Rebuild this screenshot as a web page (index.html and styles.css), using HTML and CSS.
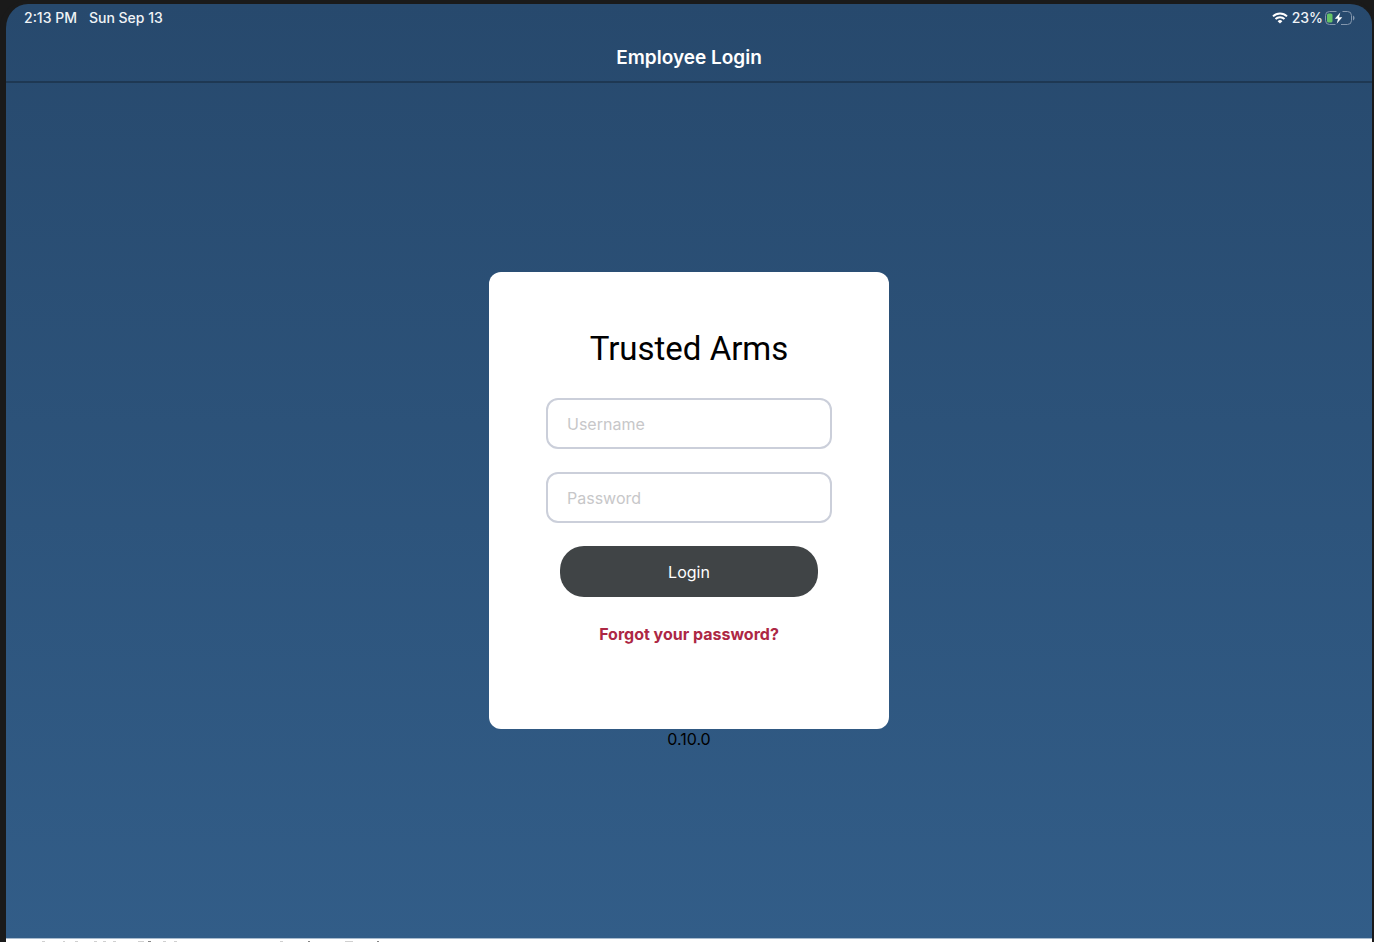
FILE: index.html
```html
<!DOCTYPE html>
<html lang="en">
<head>
<meta charset="utf-8">
<meta name="viewport" content="width=device-width, initial-scale=1">
<title>Employee Login</title>
<link rel="stylesheet" href="styles.css">
</head>
<body>
<div class="screen">
  <div class="status-bar">
    <div class="status-left"><span>2:13 PM</span><span>Sun Sep 13</span></div>
    <div class="status-right">
      <svg class="wifi" viewBox="0 0 16 12" width="16" height="12" aria-hidden="true">
        <path d="M1 4.400a10 10 0 0 1 14 0M3.500 7a6.400 6.400 0 0 1 9 0" fill="none" stroke="#fff" stroke-width="2"/>
        <path d="M8 11.600 5.600 9.200a3.400 3.400 0 0 1 4.800 0z" fill="#fff"/>
      </svg>
      <span class="percent">23%</span>
      <svg class="battery" viewBox="0 0 30 14" width="30" height="14" aria-hidden="true">
        <path d="M11.500.5H4.500a4 4 0 0 0-4 4v5a4 4 0 0 0 4 4h6M17.500.5h5a4 4 0 0 1 4 4v5a4 4 0 0 1-4 4H16" fill="none" stroke="#8497ad" stroke-width="1"/>
        <path d="M28 4.500c2 .8 2 4.200 0 5z" fill="#8497ad"/>
        <rect x="2" y="2.500" width="5.500" height="9" rx="1.600" fill="#65c466"/>
        <path d="M15.300 1.500 9.800 7.800h3.200l-1.300 4.900 5.600-6.500h-3.300z" fill="#fff"/>
      </svg>
    </div>
  </div>
  <header class="nav-bar"><h1 class="nav-title">Employee Login</h1></header>
  <main class="content">
    <form class="card">
      <h2 class="brand">Trusted Arms</h2>
      <input class="field" type="text" placeholder="Username" aria-label="Username">
      <input class="field" type="password" placeholder="Password" aria-label="Password">
      <button class="login" type="button">Login</button>
      <a class="forgot" href="#">Forgot your password?</a>
    </form>
    <p class="version">0.10.0</p>
  </main>
  <footer class="sheet">
    <svg class="sheet-marks" viewBox="0 0 420 1" width="420" height="1" aria-hidden="true">
      <path d="M36 .5h3M57 .5h2M69 .5h3M88 .5h3M97 .5h3M107 .5h3M132 .5h6M157 .5h3M168 .5h3M274 .5h3M339 .5h8" stroke="#d0d0d0"/>
      <path d="M142 .5h3M302 .5h2M371 .5h2" stroke="#858585"/>
    </svg>
  </footer>
</div>
</body>
</html>
```
FILE: styles.css
```css
* { box-sizing: border-box; }

body {
  margin: 0;
  background: #1a1a1a;
  font-family: Inter, "Liberation Sans", sans-serif;
  font-size: 16px;
  color: #000;
}

.screen {
  display: flex;
  flex-direction: column;
  min-height: 100vh;
  border: solid #1a1a1a;
  border-width: 4px 2px 0 6px;
  border-radius: 28px 24px 0 0;
  background: linear-gradient(#27496d, #325d88);
}

.status-bar {
  display: flex;
  justify-content: space-between;
  align-items: center;
  height: 28px;
  padding: 0 17px 0 18px;
  color: #f0f3f6;
  font-size: 14px;
  font-weight: 500;
  line-height: 20px;
}

.status-left { display: flex; gap: 12px; }
.status-right { display: flex; align-items: center; gap: 2px; }
.percent { margin-left: 2px; }

.nav-bar {
  display: flex;
  justify-content: center;
  align-items: center;
  height: 51px;
  padding-top: 2px;
  border-bottom: 2px solid #1e3853;
}

.nav-title {
  margin: 0;
  color: #fff;
  font-size: 19px;
  font-weight: 600;
  line-height: 24px;
}

.content {
  flex: 1;
  display: flex;
  flex-direction: column;
  align-items: center;
  justify-content: center;
}

.card {
  display: flex;
  flex-direction: column;
  align-items: center;
  width: 400px;
  max-width: 100%;
  padding: 56px 57px 84px;
  border-radius: 12px;
  background: #fff;
}

.brand {
  margin: 0 0 28px;
  font-family: Roboto, Inter, sans-serif;
  font-size: 33px;
  font-weight: 400;
  line-height: 42px;
}

.field {
  width: 100%;
  height: 51px;
  margin-bottom: 23px;
  padding: 0 19px;
  border: 2px solid #cbcfda;
  border-radius: 12px;
  background: #fff;
  color: #000;
  font: inherit;
}

.field::placeholder { color: #c7c7c9; opacity: 1; }

.login {
  width: 90%;
  height: 51px;
  border: 0;
  border-radius: 24px;
  background: #404446;
  color: #fff;
  font: inherit;
}

.forgot {
  margin-top: 26px;
  color: #ad2744;
  font-weight: 700;
  line-height: 22px;
  text-decoration: none;
}

.version { margin: 0; line-height: 20px; }

.sheet {
  display: flex;
  align-items: flex-end;
  height: 4px;
  border-top: 1px solid #a9bccf;
  background: #fff;
}
```
